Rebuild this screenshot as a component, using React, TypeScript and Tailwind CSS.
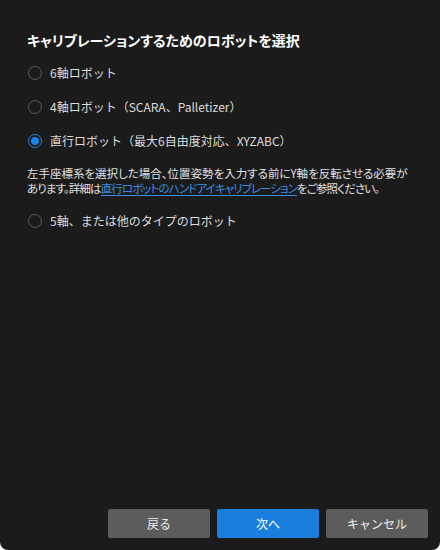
import { useState } from 'react';

const OPTIONS = [
    '6軸ロボット',
    '4軸ロボット（SCARA、Palletizer）',
    '直行ロボット（最大6自由度対応、XYZABC）',
    '5軸、または他のタイプのロボット',
];

const Radio = ({ checked }: { checked: boolean }) => (
    <span
        className={`w-[14px] h-[14px] rounded-full border flex items-center justify-center shrink-0 ${checked ? 'border-[#1c84e0] border-[1.5px]' : 'border-[#5a5a5a]'}`}
    >
        {checked && <span className="w-[8px] h-[8px] rounded-full bg-[#1c84e0]" />}
    </span>
);

const Option = ({ label, checked, onClick }: { label: string; checked: boolean; onClick: () => void }) => (
    <button onClick={onClick} className="flex items-center gap-[8px] h-5 pl-[1px] text-left">
        <Radio checked={checked} />
        <span className="text-[12px] text-[#dcdcdc] leading-5 whitespace-nowrap">{label}</span>
    </button>
);

export default function App() {
    const [selected, setSelected] = useState(2);

    return (
        <div
            className="w-[440px] h-[550px] bg-[#1b1b1b] rounded-b-[8px] flex flex-col"
            style={{ fontFamily: '"Noto Sans CJK JP", "Noto Sans", sans-serif' }}
        >
            <div className="flex-1 px-[27px] pt-[30px]">
                <h1 className="text-[14px] font-bold text-white leading-5 whitespace-nowrap [font-feature-settings:'palt']">
                    キャリブレーションするためのロボットを選択
                </h1>

                <div className="mt-[13px] flex flex-col gap-[14px]">
                    {OPTIONS.slice(0, 3).map((label, i) => (
                        <Option key={label} label={label} checked={selected === i} onClick={() => setSelected(i)} />
                    ))}
                </div>

                {/* hint for cartesian robots */}
                <p className="mt-[15px] text-[11.5px] leading-[15px] text-[#e0e0e0] whitespace-nowrap [font-feature-settings:'palt']">
                    左手座標系を選択した場合、位置姿勢を入力する前にY軸を反転させる必要が
                    <br />
                    <span className="tracking-[-0.9px]">
                        あります。詳細は
                        <a href="#" className="text-[#3a8ee6] underline underline-offset-2">直行ロボットのハンドアイキャリブレーション</a>
                        をご参照ください。
                    </span>
                </p>

                <div className="mt-[15px]">
                    <Option label={OPTIONS[3]} checked={selected === 3} onClick={() => setSelected(3)} />
                </div>
            </div>

            <div className="flex justify-end gap-[7px] pr-[12px] pb-[12px]">
                <button className="w-[102px] h-[29px] rounded-[2px] bg-[#5c5c5c] text-[12px] text-[#eeeeee]">戻る</button>
                <button className="w-[102px] h-[29px] rounded-[2px] bg-[#1a7fdc] text-[12px] text-white">次へ</button>
                <button className="w-[102px] h-[29px] rounded-[2px] bg-[#5c5c5c] text-[12px] text-[#eeeeee]">キャンセル</button>
            </div>
        </div>
    );
}
